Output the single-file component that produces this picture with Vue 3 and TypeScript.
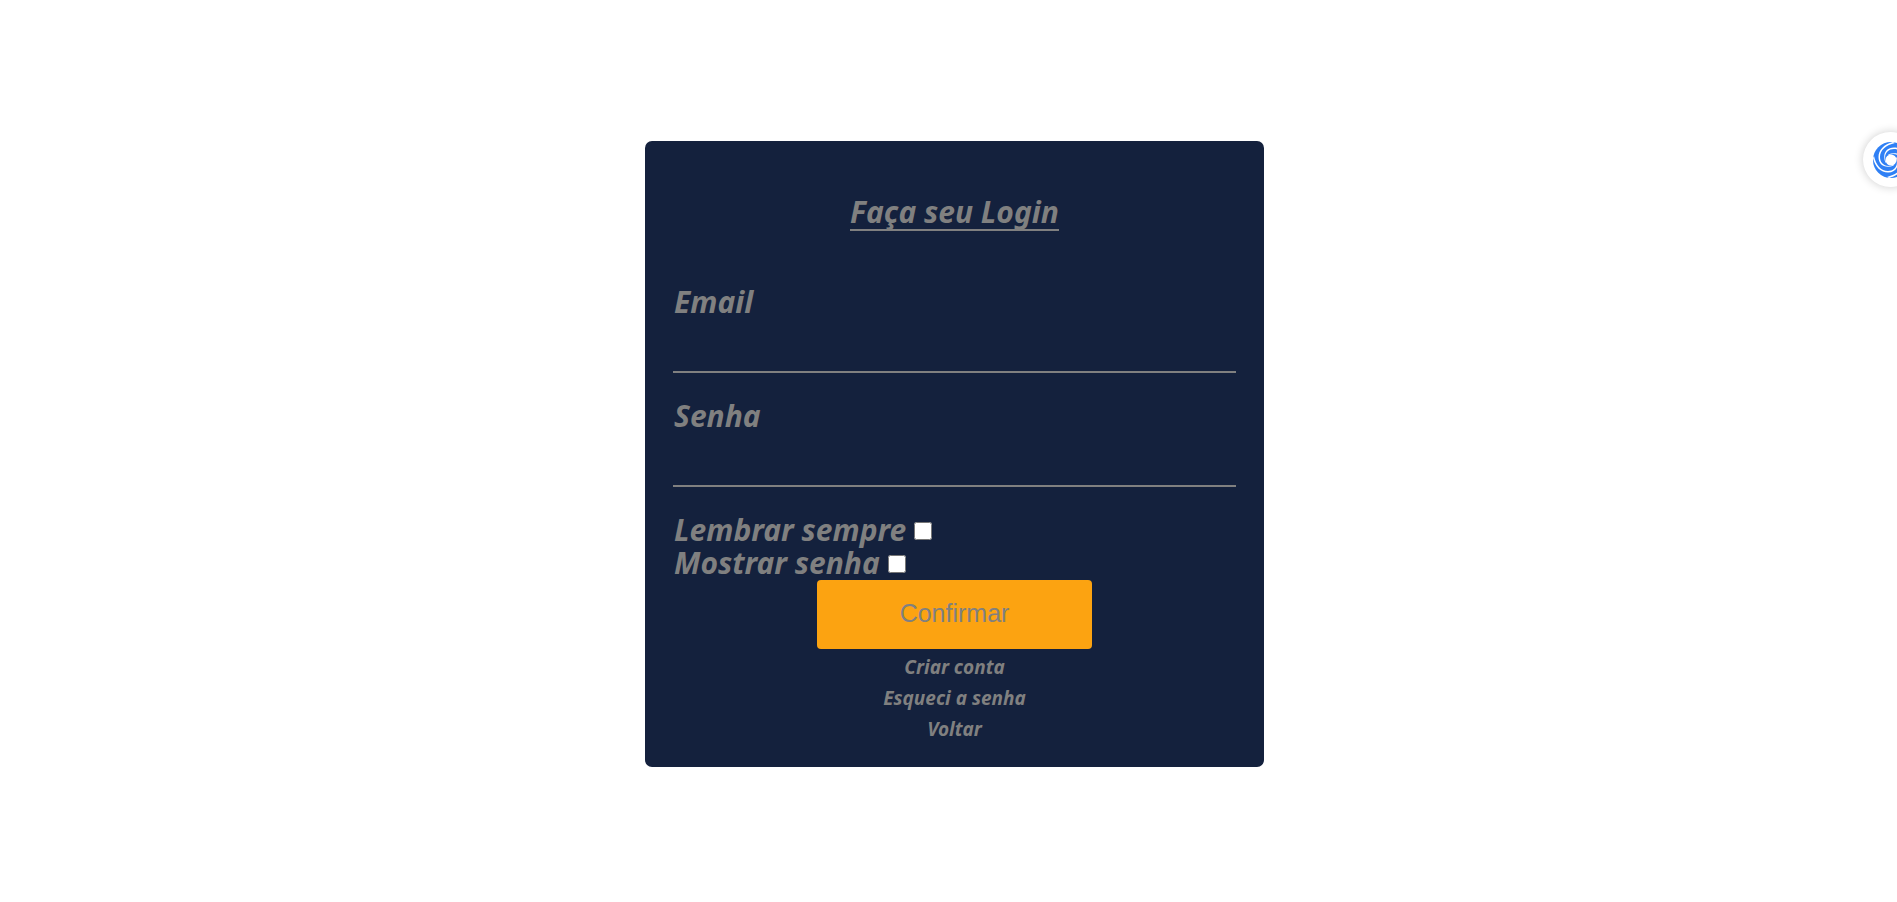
<script setup lang="ts">
import { ref } from 'vue'

const email = ref('')
const password = ref('')
const remember = ref(false)
const showPassword = ref(false)
const links: string[] = ['Criar conta', 'Esqueci a senha', 'Voltar']
</script>

<template>
  <main class="page">
    <form class="card" @submit.prevent>
      <h1 class="title">Faça seu Login</h1>

      <div class="field">
        <label for="email">Email</label>
        <input id="email" v-model="email" type="email" autocomplete="email" />
      </div>

      <div class="field">
        <label for="password">Senha</label>
        <input
          id="password"
          v-model="password"
          :type="showPassword ? 'text' : 'password'"
          autocomplete="current-password"
        />
      </div>

      <div class="option">
        <label for="remember">Lembrar sempre</label>
        <input id="remember" v-model="remember" type="checkbox" />
      </div>
      <div class="option">
        <label for="show">Mostrar senha</label>
        <input id="show" v-model="showPassword" type="checkbox" />
      </div>

      <button class="submit" type="submit">Confirmar</button>

      <nav class="links">
        <a v-for="link in links" :key="link" href="#">{{ link }}</a>
      </nav>
    </form>

    <button class="assistant" type="button" aria-label="Assistente">
      <svg viewBox="0 0 36 36" width="36" height="36" aria-hidden="true">
        <circle cx="18" cy="18" r="18" fill="#2f80f5" />
        <g fill="#fff">
          <path
            v-for="n in 4"
            :key="n"
            :transform="`rotate(${n * 90} 18 18)`"
            d="M13 20C10 12 15 7 21 7C28 7 33 13 35 22L36 20C34 11 28 5.500 21 5.500C13 5.500 9 12 12.500 21Z"
          />
          <circle cx="18" cy="18" r="5.500" />
        </g>
      </svg>
    </button>
  </main>
</template>

<style>
body {
  margin: 0;
  background: #fff;
}
</style>

<style scoped>
.page {
  position: relative;
  display: flex;
  align-items: center;
  justify-content: center;
  box-sizing: border-box;
  min-height: 100vh;
  padding: 6px 0 0 12px;
  overflow: hidden;
  color: #808080;
  font-family: "Lucida Sans", "Noto Sans", sans-serif;
  font-size: 30px;
  font-style: italic;
  font-weight: 700;
  line-height: 33px;
}

.card {
  display: flex;
  flex-direction: column;
  box-sizing: border-box;
  width: 100%;
  max-width: 619px;
  padding: 54px 28px 22px;
  border-radius: 7px;
  background: #14213d;
}

.title {
  align-self: center;
  margin: 0 0 54px;
  padding-bottom: 1px;
  border-bottom: 2px solid #808080;
  font-size: 30px;
  line-height: 33px;
}

.field {
  display: flex;
  flex-direction: column;
  margin-bottom: 26px;
}

.field label,
.option label {
  padding-left: 1px;
}

.field input {
  box-sizing: border-box;
  width: 100%;
  height: 55px;
  padding: 0 8px;
  border: 0;
  border-bottom: 2px solid #808080;
  outline: 0;
  background: transparent;
  color: inherit;
  font: inherit;
}

.option {
  display: flex;
  align-items: center;
  gap: 8px;
}

.option input {
  width: 18px;
  height: 18px;
  margin: 2px 0 0;
}

.submit {
  align-self: center;
  width: 275px;
  height: 69px;
  margin: 1px 0 3px;
  padding: 0 0 2px;
  border: 0;
  border-radius: 4px;
  background: #fca311;
  color: #808080;
  font-family: "Liberation Sans", Arial, sans-serif;
  font-size: 25px;
}

.links {
  display: flex;
  flex-direction: column;
  align-items: center;
  font-size: 19px;
  line-height: 31px;
}

.links a {
  color: inherit;
  text-decoration: none;
}

.assistant {
  position: absolute;
  top: 132px;
  right: -21px;
  display: flex;
  align-items: center;
  justify-content: center;
  width: 55px;
  height: 55px;
  padding: 0;
  border: 0;
  border-radius: 50%;
  background: #fff;
  box-shadow: 0 0 10px rgba(0, 0, 0, 0.2);
}
</style>
